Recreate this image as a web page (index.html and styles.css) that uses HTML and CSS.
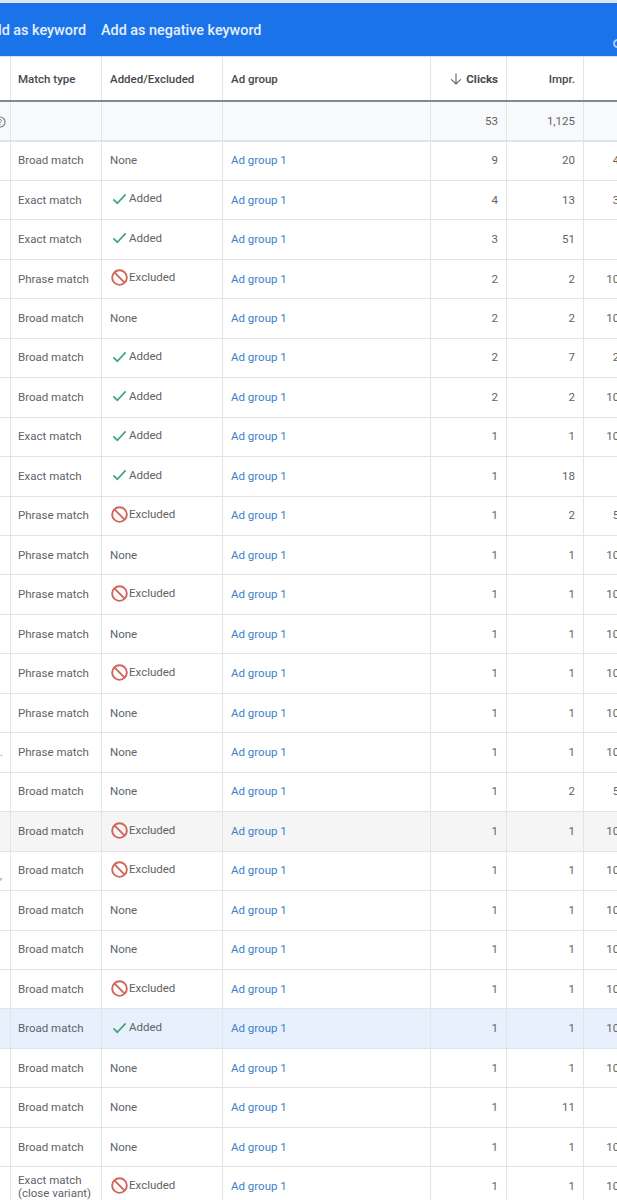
FILE: index.html
```html
<!DOCTYPE html>
<html lang="en">
<head>
  <meta charset="UTF-8" />
  <meta name="viewport" content="width=device-width, initial-scale=1.0"/>
  <title>Search terms</title>
  <link rel="stylesheet" href="styles.css">
</head>
<body>
  <svg class="defs" aria-hidden="true">
    <symbol id="ok" viewBox="0 0 16 12"><path d="M1.5 6.500 5.600 10.500 14.500 1" fill="none" stroke="#3fa57b" stroke-width="1.800"/></symbol>
    <symbol id="no" viewBox="0 0 16 16"><circle cx="8" cy="8" r="6.900" fill="none" stroke="#d2655a" stroke-width="1.800"/><path d="M3.200 3.200 12.800 12.800" stroke="#d2655a" stroke-width="1.800"/></symbol>
  </svg>

  <div class="bar">
    <span class="bar-btn first">Add as keyword</span>
    <span class="bar-btn">Add as negative keyword</span>
    <span class="bar-ring"></span>
  </div>

  <div class="row head">
    <div class="c"></div>
    <div class="c">Match type</div>
    <div class="c">Added/Excluded</div>
    <div class="c">Ad group</div>
    <div class="c n sorted">
      <svg class="arrow" viewBox="0 0 12 12"><path d="M6 .5V11M1.200 6.400 6 11l4.800-4.600" fill="none" stroke="#5f6368" stroke-width="1.100"/></svg>
      Clicks
    </div>
    <div class="c n">Impr.</div>
    <div class="c n"></div>
  </div>

  <div class="row total">
    <div class="c"><svg class="help" viewBox="0 0 12 12"><circle cx="6" cy="6" r="5" fill="none" stroke="#70757a" stroke-width="1.100"/><path d="M4.600 4.800a1.400 1.400 0 1 1 2 1.300L6 6.800M6 8.200v1" fill="none" stroke="#70757a"/></svg></div>
    <div class="c"></div>
    <div class="c"></div>
    <div class="c"></div>
    <div class="c n">53</div>
    <div class="c n">1,125</div>
    <div class="c n"></div>
  </div>

  <div class="row"><div class="c"></div><div class="c">Broad match</div><div class="c">None</div><div class="c"><a>Ad group 1</a></div><div class="c n">9</div><div class="c n">20</div><div class="c n">45.00%</div></div>
  <div class="row"><div class="c"></div><div class="c">Exact match</div><div class="c"><span class="status"><svg class="i-ok"><use href="#ok"/></svg>Added</span></div><div class="c"><a>Ad group 1</a></div><div class="c n">4</div><div class="c n">13</div><div class="c n">30.77%</div></div>
  <div class="row"><div class="c"></div><div class="c">Exact match</div><div class="c"><span class="status"><svg class="i-ok"><use href="#ok"/></svg>Added</span></div><div class="c"><a>Ad group 1</a></div><div class="c n">3</div><div class="c n">51</div><div class="c n">5.88%</div></div>
  <div class="row"><div class="c"></div><div class="c">Phrase match</div><div class="c"><span class="status"><svg class="i-no"><use href="#no"/></svg>Excluded</span></div><div class="c"><a>Ad group 1</a></div><div class="c n">2</div><div class="c n">2</div><div class="c n">100.00%</div></div>
  <div class="row"><div class="c"></div><div class="c">Broad match</div><div class="c">None</div><div class="c"><a>Ad group 1</a></div><div class="c n">2</div><div class="c n">2</div><div class="c n">100.00%</div></div>
  <div class="row"><div class="c"></div><div class="c">Broad match</div><div class="c"><span class="status"><svg class="i-ok"><use href="#ok"/></svg>Added</span></div><div class="c"><a>Ad group 1</a></div><div class="c n">2</div><div class="c n">7</div><div class="c n">28.57%</div></div>
  <div class="row"><div class="c"></div><div class="c">Broad match</div><div class="c"><span class="status"><svg class="i-ok"><use href="#ok"/></svg>Added</span></div><div class="c"><a>Ad group 1</a></div><div class="c n">2</div><div class="c n">2</div><div class="c n">100.00%</div></div>
  <div class="row"><div class="c"></div><div class="c">Exact match</div><div class="c"><span class="status"><svg class="i-ok"><use href="#ok"/></svg>Added</span></div><div class="c"><a>Ad group 1</a></div><div class="c n">1</div><div class="c n">1</div><div class="c n">100.00%</div></div>
  <div class="row"><div class="c"></div><div class="c">Exact match</div><div class="c"><span class="status"><svg class="i-ok"><use href="#ok"/></svg>Added</span></div><div class="c"><a>Ad group 1</a></div><div class="c n">1</div><div class="c n">18</div><div class="c n">5.56%</div></div>
  <div class="row"><div class="c"></div><div class="c">Phrase match</div><div class="c"><span class="status"><svg class="i-no"><use href="#no"/></svg>Excluded</span></div><div class="c"><a>Ad group 1</a></div><div class="c n">1</div><div class="c n">2</div><div class="c n">50.00%</div></div>
  <div class="row"><div class="c"></div><div class="c">Phrase match</div><div class="c">None</div><div class="c"><a>Ad group 1</a></div><div class="c n">1</div><div class="c n">1</div><div class="c n">100.00%</div></div>
  <div class="row"><div class="c"></div><div class="c">Phrase match</div><div class="c"><span class="status"><svg class="i-no"><use href="#no"/></svg>Excluded</span></div><div class="c"><a>Ad group 1</a></div><div class="c n">1</div><div class="c n">1</div><div class="c n">100.00%</div></div>
  <div class="row"><div class="c"></div><div class="c">Phrase match</div><div class="c">None</div><div class="c"><a>Ad group 1</a></div><div class="c n">1</div><div class="c n">1</div><div class="c n">100.00%</div></div>
  <div class="row"><div class="c"></div><div class="c">Phrase match</div><div class="c"><span class="status"><svg class="i-no"><use href="#no"/></svg>Excluded</span></div><div class="c"><a>Ad group 1</a></div><div class="c n">1</div><div class="c n">1</div><div class="c n">100.00%</div></div>
  <div class="row"><div class="c"></div><div class="c">Phrase match</div><div class="c">None</div><div class="c"><a>Ad group 1</a></div><div class="c n">1</div><div class="c n">1</div><div class="c n">100.00%</div></div>
  <div class="row"><div class="c cut">.</div><div class="c">Phrase match</div><div class="c">None</div><div class="c"><a>Ad group 1</a></div><div class="c n">1</div><div class="c n">1</div><div class="c n">100.00%</div></div>
  <div class="row"><div class="c"></div><div class="c">Broad match</div><div class="c">None</div><div class="c"><a>Ad group 1</a></div><div class="c n">1</div><div class="c n">2</div><div class="c n">50.00%</div></div>
  <div class="row hover"><div class="c"></div><div class="c">Broad match</div><div class="c"><span class="status"><svg class="i-no"><use href="#no"/></svg>Excluded</span></div><div class="c"><a>Ad group 1</a></div><div class="c n">1</div><div class="c n">1</div><div class="c n">100.00%</div></div>
  <div class="row"><div class="c cut low">,</div><div class="c">Broad match</div><div class="c"><span class="status"><svg class="i-no"><use href="#no"/></svg>Excluded</span></div><div class="c"><a>Ad group 1</a></div><div class="c n">1</div><div class="c n">1</div><div class="c n">100.00%</div></div>
  <div class="row"><div class="c"></div><div class="c">Broad match</div><div class="c">None</div><div class="c"><a>Ad group 1</a></div><div class="c n">1</div><div class="c n">1</div><div class="c n">100.00%</div></div>
  <div class="row"><div class="c"></div><div class="c">Broad match</div><div class="c">None</div><div class="c"><a>Ad group 1</a></div><div class="c n">1</div><div class="c n">1</div><div class="c n">100.00%</div></div>
  <div class="row"><div class="c"></div><div class="c">Broad match</div><div class="c"><span class="status"><svg class="i-no"><use href="#no"/></svg>Excluded</span></div><div class="c"><a>Ad group 1</a></div><div class="c n">1</div><div class="c n">1</div><div class="c n">100.00%</div></div>
  <div class="row selected"><div class="c"></div><div class="c">Broad match</div><div class="c"><span class="status"><svg class="i-ok"><use href="#ok"/></svg>Added</span></div><div class="c"><a>Ad group 1</a></div><div class="c n">1</div><div class="c n">1</div><div class="c n">100.00%</div></div>
  <div class="row"><div class="c"></div><div class="c">Broad match</div><div class="c">None</div><div class="c"><a>Ad group 1</a></div><div class="c n">1</div><div class="c n">1</div><div class="c n">100.00%</div></div>
  <div class="row"><div class="c"></div><div class="c">Broad match</div><div class="c">None</div><div class="c"><a>Ad group 1</a></div><div class="c n">1</div><div class="c n">11</div><div class="c n">9.09%</div></div>
  <div class="row"><div class="c"></div><div class="c">Broad match</div><div class="c">None</div><div class="c"><a>Ad group 1</a></div><div class="c n">1</div><div class="c n">1</div><div class="c n">100.00%</div></div>
  <div class="row"><div class="c"></div><div class="c">Exact match<br>(close variant)</div><div class="c"><span class="status"><svg class="i-no"><use href="#no"/></svg>Excluded</span></div><div class="c"><a>Ad group 1</a></div><div class="c n">1</div><div class="c n">1</div><div class="c n">100.00%</div></div>
</body>
</html>
```

FILE: styles.css
```css
* { box-sizing: border-box; }
html, body { overflow: hidden; }
body {
  margin: 0;
  width: 617px;
  height: 1200px;
  background: #fff;
  color: #5f6368;
  font-family: Roboto, "Liberation Sans", sans-serif;
  font-size: 11.5px;
  line-height: 13px;
}
.defs { display: none; }

.bar {
  display: flex;
  align-items: center;
  gap: 15px;
  height: 57px;
  padding-top: 1px;
  background: #1a73e8;
  border-top: 3px solid #dfe6f0;
  border-bottom: 1px solid #cfdff5;
  color: #e6effc;
  font-size: 14.4px;
  font-weight: 500;
  white-space: nowrap;
}
.bar-btn.first { margin-left: -16px; }
.bar-ring {
  width: 9px;
  height: 9px;
  margin: 26px -5px 0 auto;
  border: 2px solid #a9cdf7;
  border-radius: 50%;
  flex: none;
}

.row {
  display: grid;
  grid-template-columns: 11px 91px 121px 208px 76px 77px 80px;
  height: 39.46px;
  border-bottom: 1px solid #e3e4e6;
  background: #fff;
}
.c {
  display: flex;
  align-items: center;
  min-width: 0;
  padding: 0 0 0 7px;
  border-right: 1px solid #e3e4e6;
  white-space: nowrap;
}
.c:nth-child(n+3) { padding-left: 8px; }
.c:first-child { padding: 0; overflow: hidden; }
.c.n { justify-content: flex-end; padding: 0 8px 0 0; }
.c.n:last-child { padding-right: 13px; }
.c a { color: #3d82c8; }

.head {
  height: 45px;
  border-bottom: 2px solid #85888d;
  color: #46494d;
  font-weight: 500;
}
.head .c { padding-top: 1px; }
.sorted { font-weight: 700; }
.arrow { width: 12px; height: 12px; margin-right: 4px; }

.total {
  height: 39.5px;
  background: #f8f9fa;
  border-bottom-width: 2px;
}
.total .c { padding-top: 2px; }
.help { width: 12px; height: 12px; margin-left: -6px; flex: none; }

.hover { background: #f5f5f5; }
.selected { background: #e8f0fe; }

.status { display: flex; align-items: center; margin-top: -2.4px; }
.i-ok { width: 15px; height: 12px; margin: 0 2px 0 2px; }
.i-no { width: 17px; height: 17px; margin: 0 1px 0 1px; }

.cut { color: #70757a; font-size: 10px; }
.low { padding-top: 10px !important; }
```
